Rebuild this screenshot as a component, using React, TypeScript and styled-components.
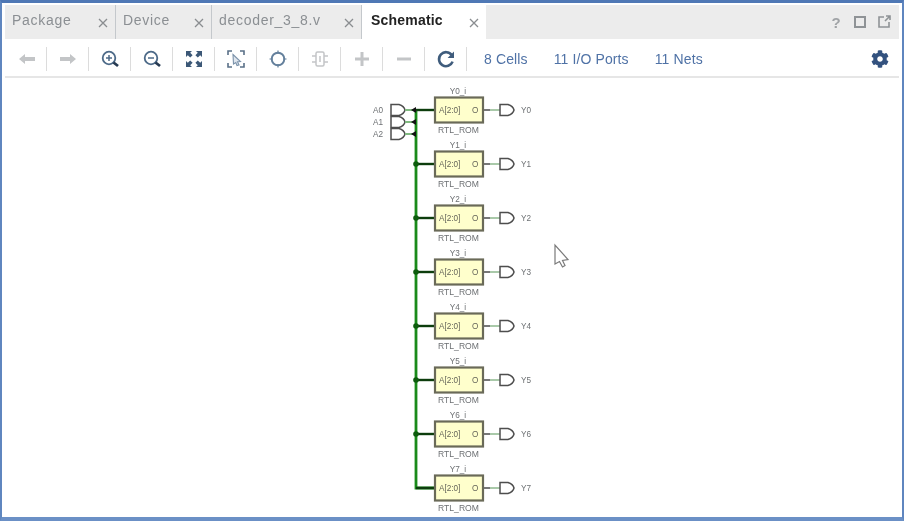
import React from "react";
import styled, { createGlobalStyle } from "styled-components";
import { FaCog } from "react-icons/fa";

const GlobalStyle = createGlobalStyle`
  html, body {
    margin: 0;
    padding: 0;
    background: #fff;
    font-family: "Liberation Sans", Arial, sans-serif;
  }
`;

const Frame = styled.div`
  width: 904px;
  height: 521px;
  box-sizing: border-box;
  display: flex;
  flex-direction: column;
  background: #fff;
  border-top: 3px solid #4f78b5;
  border-left: 2px solid #5f86bf;
  border-right: 2px solid #5f86bf;
  border-bottom: 4px solid #6b90c6;
  padding: 2px 3px 0 3px;
  filter: blur(0.6px);
`;

const TabStrip = styled.div`
  height: 34px;
  flex: none;
  display: flex;
  background: #ececec;
`;

const Tab = styled.div<{ $width: number; $active?: boolean }>`
  width: ${(p) => p.$width}px;
  box-sizing: border-box;
  flex: none;
  display: flex;
  align-items: center;
  justify-content: space-between;
  padding: 0 7px 5px 7px;
  background: ${(p) => (p.$active ? "#fff" : "transparent")};
  border-right: ${(p) => (p.$active ? "none" : "1px solid #c4c8cc")};
  padding-left: ${(p) => (p.$active ? "9px" : "7px")};
`;

const TabLabel = styled.span<{ $active?: boolean }>`
  font-size: 14px;
  letter-spacing: ${(p) => (p.$active ? "0.2px" : "0.7px")};
  font-weight: ${(p) => (p.$active ? 700 : 400)};
  color: ${(p) => (p.$active ? "#222" : "#8b8f93")};
`;

const CloseMark = styled.svg`
  width: 10px;
  height: 10px;
  margin-top: 7px;
  stroke: #8a8d90;
  stroke-width: 1.3;
  fill: none;
`;

const TabSpacer = styled.div`
  flex: 1;
  display: flex;
  align-items: center;
  justify-content: flex-end;
  gap: 8px;
  padding-right: 7px;
  background: #ececec;
`;

const WindowIcon = styled.svg`
  width: 16px;
  height: 16px;
  fill: none;
  stroke: #8f9396;
  stroke-width: 2;
`;

const HelpMark = styled.span`
  width: 16px;
  text-align: center;
  font-size: 15px;
  font-weight: 700;
  color: #a0a3a6;
`;

const Toolbar = styled.div`
  height: 39px;
  flex: none;
  box-sizing: border-box;
  display: flex;
  align-items: center;
  border-bottom: 2px solid #e6e6e6;
  padding: 2px 7px 0 0;
`;

const ToolButton = styled.div`
  width: 42px;
  height: 24px;
  flex: none;
  box-sizing: border-box;
  display: flex;
  align-items: center;
  justify-content: center;
  border-right: 1px solid #dcdcdc;
  &:first-child {
    padding-left: 3px;
  }
`;

const ToolIcon = styled.svg`
  width: 20px;
  height: 20px;
  overflow: visible;
`;

const ToolLinks = styled.div`
  display: flex;
  margin-left: 17px;
  gap: 26px;
`;

const ToolLink = styled.span`
  font-size: 14px;
  color: #4f72a6;
  letter-spacing: 0.12px;
`;

const GearSlot = styled.div`
  margin-left: auto;
  display: flex;
  color: #33527f;
  font-size: 18px;
  margin-right: 3px;
`;

const Canvas = styled.div`
  flex: 1;
  min-height: 0;
  overflow: hidden;
`;

const SchematicSvg = styled.svg`
  display: block;
  width: 894px;
  height: 435px;
  font-family: "Liberation Sans", Arial, sans-serif;
`;

const tabs = [
  { label: "Package", width: 111 },
  { label: "Device", width: 96 },
  { label: "decoder_3_8.v", width: 150 },
];

const dim = "#c3c5c7";
const dark = "#4d6a88";

// toolbar glyphs, drawn on a 20x20 box
const toolIcons: React.ReactNode[] = [
  <path d="M2 10 L8 5 V8 H18 V12 H8 V15 Z" fill={dim} />,
  <path d="M18 10 L12 5 V8 H2 V12 H12 V15 Z" fill={dim} />,
  <g fill="none" stroke={dark}>
    <circle cx="9" cy="9" r="6.3" strokeWidth="1.8" />
    <path d="M6 9H12M9 6V12" strokeWidth="1.5" />
    <path d="M13.5 13.5L18 17" stroke="#263a52" strokeWidth="2.8" />
  </g>,
  <g fill="none" stroke={dark}>
    <circle cx="9" cy="9" r="6.3" strokeWidth="1.8" />
    <path d="M6 9H12" strokeWidth="1.5" />
    <path d="M13.5 13.5L18 17" stroke="#263a52" strokeWidth="2.8" />
  </g>,
  <g fill="#3c5877">
    <path d="M2 2H8L6.2 3.8 8.6 6.2 6.2 8.6 3.8 6.2 2 8Z" />
    <path d="M18 2H12L13.8 3.8 11.4 6.2 13.8 8.6 16.2 6.2 18 8Z" />
    <path d="M2 18H8L6.2 16.2 8.6 13.8 6.2 11.4 3.8 13.8 2 12Z" />
    <path d="M18 18H12L13.8 16.2 11.4 13.8 13.8 11.4 16.2 13.8 18 12Z" />
  </g>,
  <g fill="none">
    <path d="M2 6V2H6M14 2H18V6M2 14V18H6M14 18H18V14" stroke="#5a7088" strokeWidth="1.6" />
    <path d="M7 5.5L14.5 12.5 11.5 12.8 13 16 11 16.5 9.8 13.5 7.5 15Z" stroke="#7c93ab" strokeWidth="1.1" fill="#dfe6ee" />
  </g>,
  <g fill="none" stroke="#64809c">
    <circle cx="10" cy="10" r="6.3" strokeWidth="1.9" />
    <path d="M10 1.5V5M10 15V18.5M1.5 10H5M15 10H18.5" strokeWidth="1.2" />
  </g>,
  <g fill="none" stroke={dim} strokeWidth="1.5">
    <rect x="6" y="3" width="8" height="14" rx="1.5" />
    <path d="M2 7H6M2 13H6M14 7H18M14 13H18M10 7V13" />
  </g>,
  <path d="M8.5 3H11.5V8.5H17V11.5H11.5V17H8.5V11.5H3V8.5H8.5Z" fill={dim} />,
  <rect x="3" y="8.5" width="14" height="3" fill={dim} />,
  <g fill="none">
    <path d="M15.8 6.2A7 7 0 1 0 16.6 12.6" stroke="#3f5c7c" strokeWidth="2.6" />
    <path d="M18 2.5V9H11.6Z" fill="#3f5c7c" />
  </g>,
];

const links = ["8 Cells", "11 I/O Ports", "11 Nets"];

// drawing coordinates are page coordinates less the canvas origin
const originX = 5;
const originY = 78;
const rowGap = 54;
const cells = [0, 1, 2, 3, 4, 5, 6, 7];
const inputs = [
  { name: "A0", y: 110 },
  { name: "A1", y: 122 },
  { name: "A2", y: 134 },
];

const gatePath = (x: number, y: number) =>
  `M${x} ${y - 5.5}H${x + 8}Q${x + 13} ${y - 4} ${x + 14} ${y}Q${x + 13} ${y + 4} ${x + 8} ${y + 5.5}H${x}Z`;

const labelFill = "#6d7073";

const Schematic = () => (
  <SchematicSvg viewBox={`${originX} ${originY} 894 435`}>
    {/* bus */}
    <path d="M416 110V488H435" fill="none" stroke="#1a8a1a" strokeWidth="2.8" />
    {inputs.map((input) => (
      <g key={input.name}>
        <text x="373" y={input.y + 3} fontSize="8.2" fill={labelFill}>
          {input.name}
        </text>
        <path d={gatePath(391, input.y)} fill="#fff" stroke="#4e4e4e" strokeWidth="1.5" />
        <path d={`M405 ${input.y}H413`} stroke="#7fb87f" strokeWidth="2" />
        <path d={`M411 ${input.y}l5 -3v6Z`} fill="#111" />
      </g>
    ))}
    {cells.map((i) => {
      const y = 110 + i * rowGap;
      return (
        <g key={i}>
          <text x="458" y={y - 16} fontSize="8.2" textAnchor="middle" fill={labelFill}>
            {`Y${i}_i`}
          </text>
          <path d={`M416 ${y}H435`} stroke="#0d3d0d" strokeWidth="2.4" />
          {i > 0 && i < 7 && <circle cx="416" cy={y} r="2.8" fill="#0e5c0e" />}
          <rect x="435" y={y - 12.5} width="48" height="25" fill="#ffffcc" stroke="#6a6a58" strokeWidth="2.2" />
          <text x="439" y={y + 3} fontSize="8.2" fill="#66665a">
            A[2:0]
          </text>
          <text x="472" y={y + 3} fontSize="8.2" fill="#66665a">
            O
          </text>
          <text x="458.5" y={y + 23} fontSize="8.6" textAnchor="middle" fill={labelFill}>
            RTL_ROM
          </text>
          <path d={`M484 ${y}H490`} stroke="#777" strokeWidth="2" />
          <path d={`M490 ${y}H500`} stroke="#a9c9a9" strokeWidth="2" />
          <path d={gatePath(500, y)} fill="#fff" stroke="#4e4e4e" strokeWidth="1.5" />
          <text x="521" y={y + 3} fontSize="8.2" fill={labelFill}>
            {`Y${i}`}
          </text>
        </g>
      );
    })}
    {/* mouse pointer */}
    <path
      d="M555 245V264L559.5 261.5L562.5 267L565 265.5L562.5 260.5L568 259.5Z"
      fill="#fff"
      stroke="#7a7a7a"
      strokeWidth="1.2"
    />
  </SchematicSvg>
);

export default function App() {
  return (
    <>
      <GlobalStyle />
      <Frame>
        <TabStrip>
          {tabs.map((tab) => (
            <Tab key={tab.label} $width={tab.width}>
              <TabLabel>{tab.label}</TabLabel>
              <CloseMark viewBox="0 0 10 10">
                <path d="M1 1L9 9M9 1L1 9" />
              </CloseMark>
            </Tab>
          ))}
          <Tab $width={124} $active>
            <TabLabel $active>Schematic</TabLabel>
            <CloseMark viewBox="0 0 10 10">
              <path d="M1 1L9 9M9 1L1 9" />
            </CloseMark>
          </Tab>
          <TabSpacer>
            <HelpMark>?</HelpMark>
            <WindowIcon viewBox="0 0 16 16">
              <rect x="3" y="3" width="10" height="10" />
            </WindowIcon>
            <WindowIcon viewBox="0 0 16 16">
              <path d="M8 3H3V13H13V8M9 7L14 2M10 2H14V6" strokeWidth="1.6" />
            </WindowIcon>
          </TabSpacer>
        </TabStrip>
        <Toolbar>
          {toolIcons.map((icon, i) => (
            <ToolButton key={i}>
              <ToolIcon viewBox="0 0 20 20">{icon}</ToolIcon>
            </ToolButton>
          ))}
          <ToolLinks>
            {links.map((link) => (
              <ToolLink key={link}>{link}</ToolLink>
            ))}
          </ToolLinks>
          <GearSlot>
            <FaCog />
          </GearSlot>
        </Toolbar>
        <Canvas>
          <Schematic />
        </Canvas>
      </Frame>
    </>
  );
}
